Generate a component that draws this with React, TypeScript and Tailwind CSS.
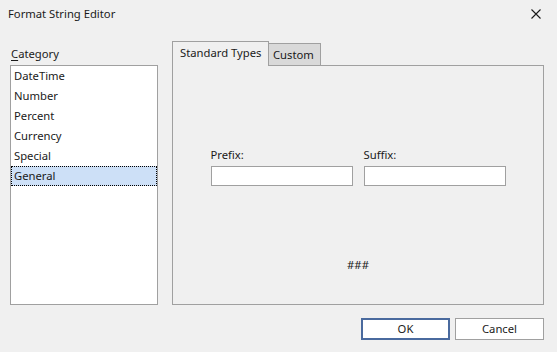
import React from "react";

const categories = ["DateTime", "Number", "Percent", "Currency", "Special", "General"];

export default function App() {
  const selected = "General";

  return (
    <div
      className="w-[557px] h-[352px] bg-[#f0f0f0] text-[#1a1a1a] text-[11.25px] flex flex-col overflow-hidden"
      style={{ fontFamily: '"Noto Sans", "Liberation Sans", sans-serif' }}
    >
      {/* Title bar */}
      <div className="h-[26px] flex items-center justify-between pl-[8px] pr-[16px] pt-[1px]">
        <span className="leading-[16px]">Format String Editor</span>
        <svg width="10" height="10" viewBox="0 0 10 10">
          <path d="M0.5 0.5 L9.5 9.5 M9.5 0.5 L0.5 9.5" stroke="#1a1a1a" strokeWidth="1.1" />
        </svg>
      </div>

      {/* Body */}
      <div className="flex pt-[15px] pl-[10px]">
        {/* Category list */}
        <div className="w-[148px] flex flex-col">
          <div className="mt-[5px] mb-[3px] h-[16px] leading-[16px] pl-[1px]">
            <span className="underline underline-offset-[2px]">C</span>ategory
          </div>
          <div className="h-[240px] border border-[#a0a0a0] bg-white flex flex-col">
            {categories.map((c) => (
              <div
                key={c}
                className={
                  c === selected
                    ? "h-[20px] leading-[18px] pl-[2px] bg-[#cde0f7] border border-dotted border-black"
                    : "h-[20px] leading-[20px] pl-[3px]"
                }
              >
                {c}
              </div>
            ))}
          </div>
        </div>

        {/* Tabs */}
        <div className="ml-[14px] w-[372px] flex flex-col">
          <div className="flex items-end h-[24px]">
            <div className="w-[97px] h-[25px] -mb-[1px] border border-b-0 border-[#a0a0a0] bg-[#f0f0f0] pl-[7px] pt-[3px] leading-[16px] relative z-10">
              Standard Types
            </div>
            <div className="w-[52px] h-[22px] border border-l-0 border-b-0 border-[#a0a0a0] bg-[#d9d9d9] pl-[4px] pt-[3px] leading-[16px]">
              Custom
            </div>
          </div>
          <div className="h-[240px] border border-[#a0a0a0] flex flex-col items-center">
            <div className="mt-[81px] flex gap-[11px]">
              <div className="flex flex-col">
                <div className="h-[16px] leading-[16px] mb-[3px]">Prefix:</div>
                <div className="w-[142px] h-[20px] bg-white border border-[#a0a0a0]" />
              </div>
              <div className="flex flex-col">
                <div className="h-[16px] leading-[16px] mb-[3px]">Suffix:</div>
                <div className="w-[142px] h-[20px] bg-white border border-[#a0a0a0]" />
              </div>
            </div>
            <div className="mt-[71px] h-[16px] leading-[16px]">###</div>
          </div>
        </div>
      </div>

      {/* Buttons */}
      <div className="flex justify-end gap-[5px] pr-[13px] mt-[13px]">
        <button className="w-[89px] h-[22px] bg-white border-2 border-[#4a6a9e] leading-[16px]">OK</button>
        <button className="w-[89px] h-[22px] bg-white border border-[#a0a0a0] leading-[16px]">Cancel</button>
      </div>
    </div>
  );
}
